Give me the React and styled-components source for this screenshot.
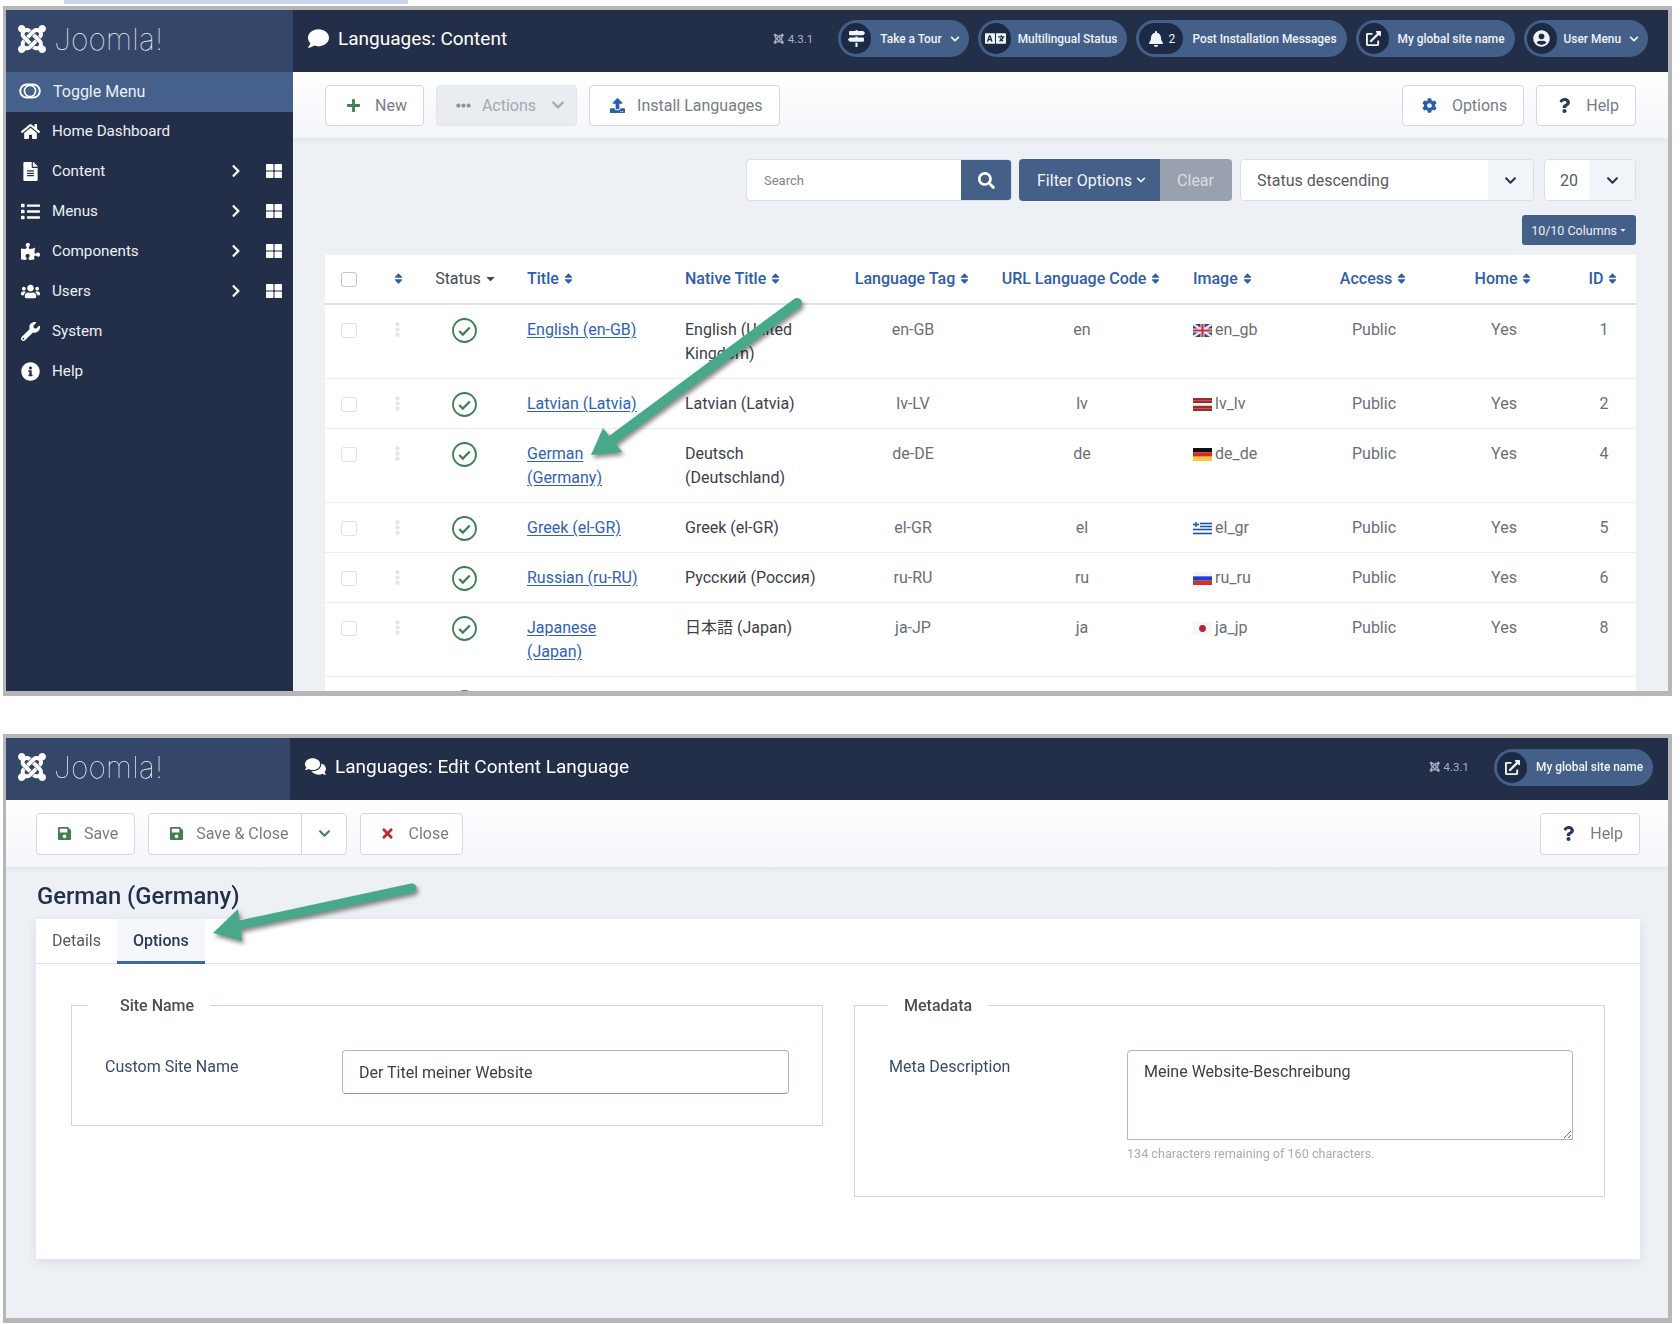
import React from 'react';
import styled, { createGlobalStyle } from 'styled-components';
import {
  FaJoomla, FaComment, FaComments, FaMapSigns, FaLanguage, FaBell, FaExternalLinkAlt, FaUserCircle,
  FaChevronDown, FaChevronRight, FaHome, FaFileAlt, FaList, FaPuzzlePiece, FaUsers, FaWrench,
  FaInfoCircle, FaThLarge, FaPlus, FaEllipsisH, FaUpload, FaCog, FaQuestion, FaSearch, FaSort, FaCaretDown,
  FaEllipsisV, FaSave, FaTimes,
} from 'react-icons/fa';

const GlobalStyle = createGlobalStyle`
  html, body { margin: 0; padding: 0; background: #fff; }
  body { font-family: Roboto, "Noto Sans CJK JP", "Liberation Sans", sans-serif; font-size: 16px; color: #3b4048; }
  * { box-sizing: border-box; }
`;

const Page = styled.div`
  position: relative;
  width: 1680px;
  height: 1324px;
  overflow: hidden;
  filter: blur(0.6px);
`;

const TopStrip = styled.div`
  width: 344px;
  height: 4px;
  margin: 0 0 2px 64px;
  background: #c9d5ec;
`;

const Frame = styled.section`
  display: flex;
  flex-direction: column;
  width: 1669px;
  height: ${(p) => p.$height}px;
  margin: ${(p) => p.$top}px 0 0 3px;
  border-style: solid;
  border-color: #b6b6b6;
  border-width: 4px 4px 5px 3px;
  background: #edf0f5;
  overflow: hidden;
`;

const Header = styled.header`
  display: flex;
  flex: none;
  align-items: center;
  height: 62px;
  padding-right: ${(p) => p.$right}px;
  background: #232f49;
  color: #fff;
`;

const Brand = styled.div`
  display: flex;
  flex: none;
  align-items: center;
  gap: 6px;
  width: ${(p) => p.$width}px;
  height: 100%;
  padding: 0 0 4px 10px;
  background: #34476a;
`;

const LogoMark = styled(FaJoomla)`
  font-size: 32px;
`;

const LogoWord = styled.span`
  font-family: Inter, Lato, Roboto, sans-serif;
  font-weight: 100;
  font-size: 30px;
  letter-spacing: 0.2px;
  color: #f2f4f8;
`;

const PageTitle = styled.h1`
  display: flex;
  flex: 1;
  align-items: center;
  gap: 9px;
  margin: 0;
  padding: 0 0 5px 15px;
  font-size: 19px;
  font-weight: 400;
  svg { font-size: 21px; }
`;

const Version = styled.span`
  display: flex;
  align-items: center;
  gap: 3px;
  margin: 0 25px 4px 0;
  font-size: 11.5px;
  color: #a9b1bf;
`;

const PillRow = styled.div`
  display: flex;
  gap: 9px;
  margin-bottom: 5px;
`;

const Pill = styled.a`
  display: flex;
  align-items: center;
  height: 37px;
  margin-bottom: ${(p) => p.$lift || 0}px;
  padding: 0 ${(p) => p.$pad || 10}px 0 3px;
  border-radius: 19px;
  background: #446089;
  color: #f0f3f8;
  font-size: 11.9px;
  font-weight: 500;
  white-space: nowrap;
  svg { flex: none; }
`;

const PillIcon = styled.span`
  display: flex;
  flex: none;
  align-items: center;
  justify-content: center;
  gap: 5px;
  width: ${(p) => p.$width || 30}px;
  height: 31px;
  margin-right: ${(p) => p.$gap || 9}px;
  border-radius: 16px;
  background: #1d2a45;
  font-size: ${(p) => p.$size || 15}px;
  font-weight: 400;
  span { font-size: 12px; }
`;

const PillCaret = styled(FaChevronDown)`
  margin-left: 8px;
  font-size: 10px;
`;

const Workspace = styled.div`
  display: flex;
  flex: 1;
  min-height: 0;
`;

const Sidebar = styled.nav`
  flex: none;
  width: 287px;
  background: #232f49;
  color: #eceff4;
`;

const NavRow = styled.a`
  display: flex;
  align-items: center;
  height: 40px;
  padding: 0 11px 2px 13px;
  font-size: ${(p) => (p.$active ? 16 : 15.2)}px;
  background: ${(p) => (p.$active ? '#44608b' : 'transparent')};
`;

const NavIcon = styled.span`
  display: flex;
  flex: none;
  justify-content: center;
  width: 22px;
  margin-right: ${(p) => (p.$wide ? 12 : 11)}px;
  font-size: 19px;
  color: #fff;
`;

const NavLabel = styled.span`
  flex: 1;
`;

const NavArrow = styled(FaChevronRight)`
  margin-right: 23px;
  font-size: 14px;
  color: #fff;
`;

const NavGrid = styled(FaThLarge)`
  font-size: 16px;
  color: #fff;
`;

const Main = styled.main`
  flex: 1;
  min-width: 0;
  overflow: hidden;
`;

const Toolbar = styled.div`
  display: flex;
  flex: none;
  align-items: center;
  justify-content: space-between;
  height: ${(p) => p.$height}px;
  padding: 0 ${(p) => p.$right}px 0 ${(p) => p.$left}px;
  background: linear-gradient(#fff, #f3f5f9);
  box-shadow: 0 2px 6px rgba(60, 80, 120, 0.07);
`;

const ToolGroup = styled.div`
  display: flex;
  gap: ${(p) => p.$gap}px;
`;

const ToolButton = styled.a`
  display: flex;
  align-items: center;
  height: ${(p) => p.$h || 41}px;
  padding: 0 ${(p) => p.$right || 16}px 0 19px;
  border: 1px solid ${(p) => (p.$off ? '#e1e4e9' : '#d0d8e6')};
  border-radius: 4px;
  background: ${(p) => (p.$off ? '#e9ecf0' : '#fff')};
  color: ${(p) => (p.$off ? '#a3a9b1' : '#767d86')};
`;

const ToolIcon = styled.span`
  display: flex;
  justify-content: center;
  width: 16px;
  margin-right: ${(p) => p.$gap || 14}px;
  font-size: 15px;
  color: ${(p) => p.$color};
`;

const ActionsCaret = styled(FaChevronDown)`
  margin-left: 15px;
  font-size: 14px;
  color: #a3a9b1;
`;

const SplitButton = styled.div`
  display: flex;
  height: 42px;
  border: 1px solid #d0d8e6;
  border-radius: 4px;
  background: #fff;
  color: #767d86;
`;

const SplitMain = styled.a`
  display: flex;
  align-items: center;
  padding: 0 12px 0 19px;
  border-right: 1px solid #d0d8e6;
`;

const SplitCaret = styled.a`
  display: flex;
  align-items: center;
  padding: 0 15px 0 16px;
  font-size: 13px;
  color: #457d54;
`;

const ListArea = styled.div`
  padding: 20px 32px 0;
`;

const FilterBar = styled.div`
  display: flex;
  justify-content: flex-end;
  gap: 7px;
  height: 44px;
  padding-top: 1px;
`;

const SearchBox = styled.div`
  display: flex;
  align-items: center;
  width: 266px;
  height: 42px;
  border: 1px solid #d8dfea;
  border-radius: 4px;
  background: #fff;
  overflow: hidden;
`;

const SearchHint = styled.span`
  flex: 1;
  padding-left: 17px;
  font-size: 13px;
  color: #80858c;
`;

const SearchButton = styled.span`
  display: flex;
  align-items: center;
  justify-content: center;
  width: 50px;
  height: 100%;
  background: #446089;
  color: #fff;
  font-size: 17px;
`;

const FilterGroup = styled.div`
  display: flex;
  height: 42px;
  border-radius: 4px;
  overflow: hidden;
`;

const FilterButton = styled.span`
  display: flex;
  align-items: center;
  gap: 4px;
  padding: 0 14px 0 18px;
  background: #446089;
  color: #f2f4f8;
  svg { font-size: 10px; }
`;

const ClearButton = styled.span`
  display: flex;
  align-items: center;
  padding: 0 18px 0 17px;
  background: #9aa1ae;
  color: #d9dde2;
`;

const SelectBox = styled.div`
  display: flex;
  align-items: center;
  width: ${(p) => p.$width}px;
  height: 42px;
  margin-left: ${(p) => p.$gap || 0}px;
  border: 1px solid #d8dfea;
  border-radius: 4px;
  background: #fff;
  overflow: hidden;
`;

const SelectText = styled.span`
  flex: 1;
  padding-left: ${(p) => p.$pad}px;
  color: #565b62;
`;

const SelectArrow = styled.span`
  display: flex;
  align-items: center;
  justify-content: center;
  width: ${(p) => p.$width}px;
  height: 100%;
  background: #f1f4f9;
  color: #2a3345;
  font-size: 13px;
`;

const ColumnsRow = styled.div`
  display: flex;
  justify-content: flex-end;
  margin: 13px 0 10px;
`;

const ColumnsButton = styled.span`
  display: flex;
  align-items: center;
  gap: 2px;
  height: 30px;
  padding: 0 9px;
  border-radius: 3px;
  background: #446089;
  color: #eef1f6;
  font-size: 12.5px;
  svg { font-size: 8px; }
`;

const Table = styled.table`
  width: 100%;
  table-layout: fixed;
  border-collapse: collapse;
  background: #fff;
  line-height: 24px;
`;

const HeadCell = styled.th`
  height: 49px;
  padding: 0 0 0 ${(p) => p.$pad || 0}px;
  border-bottom: 2px solid #dde1e7;
  text-align: ${(p) => p.$align || 'center'};
  font-weight: ${(p) => (p.$plain ? 400 : 500)};
  color: ${(p) => (p.$plain ? '#454a52' : '#2f5da9')};
  white-space: nowrap;
  svg { margin-left: 3px; font-size: 13px; vertical-align: -1px; }
`;

const Cell = styled.td`
  padding: 13px ${(p) => p.$right || 0}px 12px ${(p) => p.$pad || 0}px;
  border-bottom: 1px solid #eceef2;
  vertical-align: top;
  text-align: ${(p) => p.$align || 'center'};
  color: ${(p) => (p.$dark ? '#3b4048' : '#6a6f76')};
`;

const TitleLink = styled.a`
  color: #2f62b4;
  text-decoration: underline;
  text-underline-offset: 2px;
`;

const CheckBox = styled.span`
  display: block;
  width: 16px;
  height: 15px;
  margin-top: ${(p) => p.$top}px;
  border: 1px solid ${(p) => (p.$strong ? '#c4c8ce' : '#dfe1e5')};
  border-radius: 3px;
  background: #fff;
`;

const Handle = styled(FaEllipsisV)`
  display: block;
  margin: 4px auto 0;
  font-size: 15px;
  color: #e2e4e7;
`;

const StatusSvg = styled.svg`
  display: block;
  margin: 0 auto -1px;
`;

const FlagWrap = styled.span`
  display: inline-flex;
  align-items: center;
  gap: 3px;
  vertical-align: top;
  svg { flex: none; }
`;

const TableArrow = styled.svg`
  position: absolute;
  left: 580px;
  top: 295px;
  overflow: visible;
  filter: drop-shadow(2px 3px 2px rgba(0, 0, 0, 0.45));
`;

const TabArrow = styled.svg`
  position: absolute;
  left: 205px;
  top: 880px;
  overflow: visible;
  filter: drop-shadow(2px 3px 2px rgba(0, 0, 0, 0.45));
`;

const EditArea = styled.div`
  flex: 1;
  padding: 13px 28px 0 30px;
`;

const EditTitle = styled.h2`
  margin: 0;
  height: 39px;
  padding-left: 1px;
  font-size: 23.8px;
  line-height: 32px;
  font-weight: 500;
  color: #22304a;
`;

const Card = styled.div`
  height: 340px;
  background: #fff;
  box-shadow: 0 3px 10px rgba(60, 80, 120, 0.1);
`;

const TabBar = styled.div`
  display: flex;
  height: 45px;
  border-bottom: 1px solid #dfe4ec;
`;

const Tab = styled.a`
  display: flex;
  align-items: center;
  height: 45px;
  padding: 0 16px;
  margin-bottom: -1px;
  font-weight: ${(p) => (p.$active ? 500 : 400)};
  color: ${(p) => (p.$active ? '#2a3a5c' : '#565b62')};
  background: ${(p) => (p.$active ? '#f5f7fb' : 'transparent')};
  border-bottom: 3px solid ${(p) => (p.$active ? '#3b65ac' : 'transparent')};
`;

const FieldColumns = styled.div`
  display: grid;
  grid-template-columns: 752px 751px;
  gap: 31px;
  align-items: start;
  padding: 32px 35px 0;
`;

const Field = styled.fieldset`
  min-width: 0;
  margin: 0;
  padding: 35px ${(p) => p.$right}px ${(p) => p.$bottom}px ${(p) => p.$left}px;
  border: 1px solid #cdd6e6;
`;

const Legend = styled.legend`
  margin-left: ${(p) => p.$left}px;
  padding: 0 16px 0 ${(p) => p.$pad}px;
  font-weight: 500;
  color: #4a4f57;
`;

const FieldRow = styled.div`
  display: grid;
  grid-template-columns: ${(p) => p.$label}px 1fr;
`;

const FieldLabel = styled.label`
  padding-top: 7px;
  color: #3a4a6b;
`;

const TextInput = styled.input`
  display: block;
  width: 100%;
  height: 44px;
  padding: 0 16px;
  border: 1px solid #a5c0ab;
  border-bottom-color: #7fa58a;
  border-radius: 4px;
  font: inherit;
  color: #3b4048;
  outline: none;
`;

const TextArea = styled.textarea`
  display: block;
  width: 100%;
  height: 90px;
  padding: 11px 16px;
  border: 1px solid #a5c0ab;
  border-radius: 4px 4px 0 0;
  font: inherit;
  color: #3b4048;
  outline: none;
`;

const FieldHint = styled.small`
  display: block;
  margin-top: 6px;
  font-size: 12.6px;
  line-height: 16px;
  color: #a8adb3;
`;

const StatusIcon = () => (
  <StatusSvg width="25" height="25" viewBox="0 0 25 25" fill="none">
    <circle cx="12.5" cy="12.5" r="11.5" stroke="#3f7d54" strokeWidth="1.8" />
    <path d="M7.2 13l3.6 3.6 7-7.2" stroke="#3f7d54" strokeWidth="2.2" />
  </StatusSvg>
);

const ToggleIcon = () => (
  <svg width="22" height="16" viewBox="0 0 22 16" fill="none">
    <rect x="1.2" y="1.5" width="19.6" height="13" rx="6.5" stroke="#fff" strokeWidth="2" />
    <circle cx="11" cy="8" r="5.6" stroke="#fff" strokeWidth="1.6" />
  </svg>
);

const Flag = ({ code }) => {
  const stripes = {
    lv: ['#9e2a2b', '#9e2a2b', '#f4f4f4', '#9e2a2b', '#9e2a2b'],
    de: ['#111', '#d92b1c', '#f7ca3e'],
    ru: ['#f4f4f4', '#1c3fd0', '#d8301f'],
  }[code];
  if (stripes) {
    return (
      <svg width="19" height="13" viewBox={`0 0 19 ${stripes.length}`} preserveAspectRatio="none">
        {stripes.map((c, i) => <rect key={i} y={i} width="19" height="1" fill={c} />)}
      </svg>
    );
  }
  if (code === 'gb') {
    return (
      <svg width="19" height="13" viewBox="0 0 19 13">
        <rect width="19" height="13" fill="#2d3f8e" />
        <path d="M0 0L19 13M19 0L0 13" stroke="#f3dede" strokeWidth="2.4" />
        <path d="M9.5 0V13M0 6.5H19" stroke="#f3f3f3" strokeWidth="4" />
        <path d="M9.5 0V13M0 6.5H19" stroke="#c9303e" strokeWidth="2.2" />
      </svg>
    );
  }
  if (code === 'gr') {
    return (
      <svg width="19" height="13" viewBox="0 0 19 13">
        <rect width="19" height="13" fill="#f2f5fa" />
        <path d="M7 1.5H19M7 4.5H19M0 7.5H19M0 11.5H19" stroke="#1f4f9f" strokeWidth="1.6" />
        <path d="M0 2.5H6M3 0V5" stroke="#1f4f9f" strokeWidth="1.4" />
      </svg>
    );
  }
  return (
    <svg width="19" height="13" viewBox="0 0 19 13">
      <rect width="19" height="13" fill="#f6f6f6" />
      <circle cx="9.5" cy="6.5" r="3.4" fill="#b9203a" />
    </svg>
  );
};

const Logo = () => (
  <>
    <LogoMark />
    <LogoWord>Joomla!</LogoWord>
  </>
);

const navItems = [
  { icon: <FaHome />, label: 'Home Dashboard' },
  { icon: <FaFileAlt />, label: 'Content', sub: true },
  { icon: <FaList />, label: 'Menus', sub: true },
  { icon: <FaPuzzlePiece />, label: 'Components', sub: true },
  { icon: <FaUsers />, label: 'Users', sub: true },
  { icon: <FaWrench />, label: 'System' },
  { icon: <FaInfoCircle />, label: 'Help' },
];

const languages = [
  { title: 'English (en-GB)', native: 'English (United Kingdom)', tag: 'en-GB', url: 'en', image: 'en_gb', flag: 'gb', id: 1 },
  { title: 'Latvian (Latvia)', native: 'Latvian (Latvia)', tag: 'lv-LV', url: 'lv', image: 'lv_lv', flag: 'lv', id: 2 },
  { title: 'German (Germany)', native: 'Deutsch (Deutschland)', tag: 'de-DE', url: 'de', image: 'de_de', flag: 'de', id: 4 },
  { title: 'Greek (el-GR)', native: 'Greek (el-GR)', tag: 'el-GR', url: 'el', image: 'el_gr', flag: 'gr', id: 5 },
  { title: 'Russian (ru-RU)', native: 'Русский (Россия)', tag: 'ru-RU', url: 'ru', image: 'ru_ru', flag: 'ru', id: 6 },
  { title: 'Japanese (Japan)', native: '日本語 (Japan)', tag: 'ja-JP', url: 'ja', image: 'ja_jp', flag: 'jp', id: 8 },
];

const columns = [52, 40, 95, 157, 172, 144, 194, 133, 124, 136, 64];

const App = () => (
  <Page>
    <GlobalStyle />
    <TopStrip />

    <Frame $height={690} $top={0}>
      <Header $right={20}>
        <Brand $width={287}><Logo /></Brand>
        <PageTitle><FaComment />Languages: Content</PageTitle>
        <Version><FaJoomla />4.3.1</Version>
        <PillRow>
          <Pill $pad={9}>
            <PillIcon $size={17}><FaMapSigns /></PillIcon>Take a Tour<PillCaret />
          </Pill>
          <Pill>
            <PillIcon $gap={7} $size={21}><FaLanguage /></PillIcon>Multilingual Status
          </Pill>
          <Pill>
            <PillIcon $width={44} $gap={9} $size={16}><FaBell /><span>2</span></PillIcon>Post Installation Messages
          </Pill>
          <Pill>
            <PillIcon><FaExternalLinkAlt /></PillIcon>My global site name
          </Pill>
          <Pill $pad={9}>
            <PillIcon $gap={7} $size={17}><FaUserCircle /></PillIcon>User Menu<PillCaret />
          </Pill>
        </PillRow>
      </Header>

      <Workspace>
        <Sidebar>
          <NavRow $active>
            <NavIcon $wide><ToggleIcon /></NavIcon>
            <NavLabel>Toggle Menu</NavLabel>
          </NavRow>
          {navItems.map((item) => (
            <NavRow key={item.label}>
              <NavIcon>{item.icon}</NavIcon>
              <NavLabel>{item.label}</NavLabel>
              {item.sub && <NavArrow />}
              {item.sub && <NavGrid />}
            </NavRow>
          ))}
        </Sidebar>

        <Main>
          <Toolbar $height={66} $left={32} $right={32}>
            <ToolGroup $gap={12}>
              <ToolButton><ToolIcon $color="#457d54"><FaPlus /></ToolIcon>New</ToolButton>
              <ToolButton $off $right={11}><ToolIcon $color="#8d949c" $gap={10}><FaEllipsisH /></ToolIcon>Actions<ActionsCaret /></ToolButton>
              <ToolButton><ToolIcon $color="#2a5fb0" $gap={12}><FaUpload /></ToolIcon>Install Languages</ToolButton>
            </ToolGroup>
            <ToolGroup $gap={12}>
              <ToolButton><ToolIcon $color="#2a5fb0"><FaCog /></ToolIcon>Options</ToolButton>
              <ToolButton><ToolIcon $color="#2a3a5c"><FaQuestion /></ToolIcon>Help</ToolButton>
            </ToolGroup>
          </Toolbar>

          <ListArea>
            <FilterBar>
              <SearchBox>
                <SearchHint>Search</SearchHint>
                <SearchButton><FaSearch /></SearchButton>
              </SearchBox>
              <FilterGroup>
                <FilterButton>Filter Options<FaChevronDown /></FilterButton>
                <ClearButton>Clear</ClearButton>
              </FilterGroup>
              <SelectBox $width={294} $gap={1}>
                <SelectText $pad={16}>Status descending</SelectText>
                <SelectArrow $width={45}><FaChevronDown /></SelectArrow>
              </SelectBox>
              <SelectBox $width={92} $gap={3}>
                <SelectText $pad={15}>20</SelectText>
                <SelectArrow $width={46}><FaChevronDown /></SelectArrow>
              </SelectBox>
            </FilterBar>

            <ColumnsRow>
              <ColumnsButton>10/10 Columns<FaCaretDown /></ColumnsButton>
            </ColumnsRow>

            <Table>
              <colgroup>
                {columns.map((w, i) => <col key={i} width={w} />)}
              </colgroup>
              <thead>
                <tr>
                  <HeadCell $align="left" $pad={16}><CheckBox $top={0} $strong /></HeadCell>
                  <HeadCell><FaSort /></HeadCell>
                  <HeadCell $plain $pad={3}>Status<FaCaretDown /></HeadCell>
                  <HeadCell $align="left" $pad={15}>Title<FaSort /></HeadCell>
                  <HeadCell $align="left" $pad={16}>Native Title<FaSort /></HeadCell>
                  <HeadCell>Language Tag<FaSort /></HeadCell>
                  <HeadCell>URL Language Code<FaSort /></HeadCell>
                  <HeadCell $align="left" $pad={14}>Image<FaSort /></HeadCell>
                  <HeadCell>Access<FaSort /></HeadCell>
                  <HeadCell>Home<FaSort /></HeadCell>
                  <HeadCell>ID<FaSort /></HeadCell>
                </tr>
              </thead>
              <tbody>
                {languages.map((row) => (
                  <tr key={row.id}>
                    <Cell $align="left" $pad={16}><CheckBox $top={5} /></Cell>
                    <Cell><Handle /></Cell>
                    <Cell><StatusIcon /></Cell>
                    <Cell $align="left" $pad={15} $right={23}><TitleLink>{row.title}</TitleLink></Cell>
                    <Cell $align="left" $pad={16} $right={16} $dark>{row.native}</Cell>
                    <Cell>{row.tag}</Cell>
                    <Cell>{row.url}</Cell>
                    <Cell $align="left" $pad={14}><FlagWrap><Flag code={row.flag} />{row.image}</FlagWrap></Cell>
                    <Cell>Public</Cell>
                    <Cell>Yes</Cell>
                    <Cell>{row.id}</Cell>
                  </tr>
                ))}
                <tr>
                  <Cell $align="left" $pad={16}><CheckBox $top={5} /></Cell>
                  <Cell><Handle /></Cell>
                  <Cell><StatusIcon /></Cell>
                </tr>
              </tbody>
            </Table>
          </ListArea>
        </Main>
      </Workspace>
    </Frame>

    <Frame $height={589} $top={38}>
      <Header $right={15}>
        <Brand $width={284}><Logo /></Brand>
        <PageTitle><FaComments />Languages: Edit Content Language</PageTitle>
        <Version><FaJoomla />4.3.1</Version>
        <Pill $lift={4}>
          <PillIcon><FaExternalLinkAlt /></PillIcon>My global site name
        </Pill>
      </Header>

      <Toolbar $height={67} $left={30} $right={28}>
        <ToolGroup $gap={13}>
          <ToolButton $h={42}><ToolIcon $color="#457d54" $gap={12}><FaSave /></ToolIcon>Save</ToolButton>
          <SplitButton>
            <SplitMain><ToolIcon $color="#457d54" $gap={12}><FaSave /></ToolIcon>Save &amp; Close</SplitMain>
            <SplitCaret><FaChevronDown /></SplitCaret>
          </SplitButton>
          <ToolButton $h={42} $right={13}><ToolIcon $color="#c0282d" $gap={13}><FaTimes /></ToolIcon>Close</ToolButton>
        </ToolGroup>
        <ToolButton $h={42}><ToolIcon $color="#2a3a5c"><FaQuestion /></ToolIcon>Help</ToolButton>
      </Toolbar>

      <EditArea>
        <EditTitle>German (Germany)</EditTitle>
        <Card>
          <TabBar>
            <Tab>Details</Tab>
            <Tab $active>Options</Tab>
          </TabBar>
          <FieldColumns>
            <Field $left={33} $right={33} $bottom={31}>
              <Legend $left={-17} $pad={32}>Site Name</Legend>
              <FieldRow $label={237}>
                <FieldLabel>Custom Site Name</FieldLabel>
                <TextInput readOnly value="Der Titel meiner Website" />
              </FieldRow>
            </Field>
            <Field $left={34} $right={31} $bottom={34}>
              <Legend $left={-1} $pad={16}>Metadata</Legend>
              <FieldRow $label={238}>
                <FieldLabel>Meta Description</FieldLabel>
                <div>
                  <TextArea readOnly value="Meine Website-Beschreibung" />
                  <FieldHint>134 characters remaining of 160 characters.</FieldHint>
                </div>
              </FieldRow>
            </Field>
          </FieldColumns>
        </Card>
      </EditArea>
    </Frame>

    <TableArrow width="230" height="175" viewBox="0 0 230 175">
      <path d="M217 8L32 145" stroke="#48a98a" strokeWidth="10" strokeLinecap="round" />
      <polygon points="11,160 23,133 42,157" fill="#48a98a" />
    </TableArrow>
    <TabArrow width="220" height="70" viewBox="0 0 220 70">
      <path d="M207 8L35 45" stroke="#48a98a" strokeWidth="9" strokeLinecap="round" />
      <polygon points="8,53 33,29 37,61" fill="#48a98a" />
    </TabArrow>
  </Page>
);

export default App;
